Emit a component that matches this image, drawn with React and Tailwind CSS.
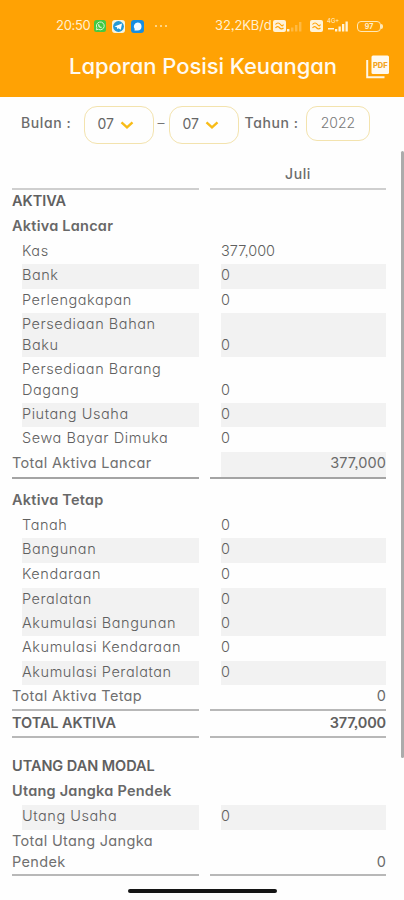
import React from 'react';

const ROWS = [
    { type: 'title', label: 'AKTIVA', h: 'h-[25px]' },
    { type: 'group', label: 'Aktiva Lancar', h: 'h-[25px]' },
    { type: 'item', label: 'Kas', value: '377,000', h: 'h-[24px]' },
    { type: 'item', label: 'Bank', value: '0', h: 'h-[25px]', striped: true },
    { type: 'item', label: 'Perlengakapan', value: '0', h: 'h-[24px]' },
    { type: 'item', label: 'Persediaan Bahan Baku', value: '0', h: 'h-[44px]', striped: true, tall: true },
    { type: 'item', label: 'Persediaan Barang Dagang', value: '0', h: 'h-[46px]', tall: true, nudge: true },
    { type: 'item', label: 'Piutang Usaha', value: '0', h: 'h-[24px]', striped: true },
    { type: 'item', label: 'Sewa Bayar Dimuka', value: '0', h: 'h-[25px]' },
    { type: 'total', label: 'Total Aktiva Lancar', value: '377,000', h: 'h-[25px]', shaded: true },
    { type: 'line', h: 'h-[12px]', color: 'bg-[#a4a4a4]' },
    { type: 'group', label: 'Aktiva Tetap', h: 'h-[25px]' },
    { type: 'item', label: 'Tanah', value: '0', h: 'h-[24px]' },
    { type: 'item', label: 'Bangunan', value: '0', h: 'h-[25px]', striped: true },
    { type: 'item', label: 'Kendaraan', value: '0', h: 'h-[25px]' },
    { type: 'item', label: 'Peralatan', value: '0', h: 'h-[24px]', striped: true },
    { type: 'item', label: 'Akumulasi Bangunan', value: '0', h: 'h-[24px]', striped: true },
    { type: 'item', label: 'Akumulasi Kendaraan', value: '0', h: 'h-[25px]' },
    { type: 'item', label: 'Akumulasi Peralatan', value: '0', h: 'h-[24px]', striped: true },
    { type: 'total', label: 'Total Aktiva Tetap', value: '0', h: 'h-[24px]' },
    { type: 'line', h: 'h-[3px]', color: 'bg-[#b8b8b8]' },
    { type: 'grand', label: 'TOTAL AKTIVA', value: '377,000', h: 'h-[24px]' },
    { type: 'line', h: 'h-[19px]', color: 'bg-[#b8b8b8]' },
    { type: 'title', label: 'UTANG DAN MODAL', h: 'h-[25px]' },
    { type: 'group', label: 'Utang Jangka Pendek', h: 'h-[25px]' },
    { type: 'item', label: 'Utang Usaha', value: '0', h: 'h-[25px]', striped: true },
    { type: 'total', label: 'Total Utang Jangka Pendek', value: '0', h: 'h-[44px]', tall: true },
    { type: 'line', h: 'h-[4px]', color: 'bg-[#b8b8b8]' },
];

const LABEL_STYLES = {
    title: 'font-semibold text-[#606060] tracking-[-0.04px]',
    group: 'font-semibold text-[#686868] tracking-[0.24px]',
    item: 'font-light text-[#606060] tracking-[0.56px]',
    total: 'font-normal text-[#707070] tracking-[0.33px]',
    grand: 'font-semibold text-[#606060] tracking-[-0.08px]',
};

const VALUE_STYLES = {
    item: 'font-light text-[#606060]',
    total: 'justify-end font-normal text-[#6a6a6a] tracking-[0.1px]',
    grand: 'justify-end font-semibold text-[#606060] tracking-[-0.15px]',
};

const Row = ({ row }) => {
    if (row.type === 'line') {
        return (
            <div className={`flex gap-[11px] ${row.h}`}>
                <div className={`h-[2px] w-[187px] ${row.color}`} />
                <div className={`h-[2px] w-[176px] ${row.color}`} />
            </div>
        );
    }

    const isItem = row.type === 'item';
    const bg = row.striped ? 'bg-[#f2f2f2]' : '';
    const top = row.nudge ? 'pt-[2px]' : 'pt-px';
    const valueTop = row.nudge ? 'pt-[22.5px]' : row.tall ? 'pt-[21.5px]' : 'pt-px';

    return (
        <div className={`flex gap-[22px] text-[14.5px] leading-[20.5px] ${row.h}`}>
            <div
                className={`${LABEL_STYLES[row.type]} ${top} ${
                    isItem ? `ml-[10px] w-[177px] ${row.tall ? 'pr-[28px]' : ''} ${bg}` : 'w-[187px] pr-3'
                }`}
            >
                {row.label}
            </div>
            <div
                className={`flex w-[165px] ${valueTop} ${VALUE_STYLES[row.type] || ''} ${bg} ${
                    row.shaded ? 'bg-[#f2f2f2]' : ''
                }`}
            >
                {row.value}
            </div>
        </div>
    );
};

const MonthSelect = ({ value }) => (
    <button className="flex h-[38px] w-[70px] items-center gap-[6px] rounded-[13px] border-[1.5px] border-[#f3e3ae] pl-[13px] pb-[3px] text-[14px] font-normal text-[#666]">
        {value}
        <svg className="mt-[3px] h-[8px] w-[14px]" viewBox="0 0 14 8" fill="none" stroke="#f8bc18" strokeWidth="2.4">
            <path d="M1.500 1.300 7 6.300 12.500 1.300" />
        </svg>
    </button>
);

const Signal = ({ faded }) => (
    <svg className="h-[12px] w-[18px]" viewBox="0 0 18 12" fill="#fff3d8">
        <rect x="1" y="9" width="2.4" height="2.5" />
        <rect x="5" y="7.5" width="2.4" height="4" opacity={faded ? 0.3 : 1} />
        <rect x="9" y="5" width="2.4" height="6.5" opacity={faded ? 0.3 : 1} />
        <rect x="13" y="2" width="2.4" height="9.5" opacity={faded ? 0.3 : 1} />
    </svg>
);

const SimBadge = () => (
    <svg className="h-[12px] w-[13px]" viewBox="0 0 13 12">
        <rect width="13" height="12" rx="2" fill="#fff3d8" />
        <path
            d="M2.500 4.500c1.500-2 3.500-2 5 0s2 1.500 3 0M2.500 8c1.500-2 3-1.500 4.300 0s2.500 1 3.700 0"
            fill="none"
            stroke="#ffa204"
            strokeWidth="1.2"
        />
    </svg>
);

const StatusBar = () => (
    <div className="flex h-[52px] items-center pl-[56px] text-[13px] text-[#fff0d0]">
        <span className="w-[38px] tracking-[-0.3px]">20:50</span>
        <svg className="h-[12px] w-[12px]" viewBox="0 0 12 12">
            <rect width="12" height="12" rx="2.5" fill="#43c942" />
            <path d="m2.300 9.800.6-2A3.900 3.900 0 1 1 4.400 9.300z" fill="none" stroke="#d8f5d0" strokeWidth="1" />
            <path d="M4.600 4.300c0 2 1.300 3.200 3 3.200" fill="none" stroke="#d8f5d0" strokeWidth="1.300" />
        </svg>
        <svg className="ml-[6px] h-[13px] w-[13px]" viewBox="0 0 13 13">
            <rect width="13" height="13" rx="3" fill="#f7f4df" />
            <circle cx="6.500" cy="6.500" r="5.400" fill="#2499d7" />
            <path d="m2.500 6.500 7.500-3-1.200 6.300-2.300-1.600-1.200 1-.3-2z" fill="#fff" />
        </svg>
        <svg className="ml-[6px] h-[13px] w-[13px]" viewBox="0 0 13 13">
            <rect width="13" height="13" rx="3" fill="#168de0" />
            <path d="M6.500 2.500a4 4 0 0 1 0 8H3.400l.3-1.500A4 4 0 0 1 6.500 2.500z" fill="#f3fbff" />
        </svg>
        <div className="ml-[11px] flex gap-[3px]">
            <i className="size-[2px] rounded-full bg-[#ffe5ad]" />
            <i className="size-[2px] rounded-full bg-[#ffe5ad]" />
            <i className="size-[2px] rounded-full bg-[#ffe5ad]" />
        </div>
        <span className="ml-[48px] w-[58px] whitespace-nowrap tracking-[-0.1px]">32,2KB/d</span>
        <SimBadge />
        <Signal faded />
        <div className="ml-[6px] flex items-center">
            <SimBadge />
            <div className="relative ml-[4px]">
                <span className="absolute -top-[2px] left-0 text-[6px] leading-none">4G+</span>
                <svg className="h-[12px] w-[22px]" viewBox="0 0 22 12" fill="#fff3d8">
                    <path d="M1 8h6v1.500H1zM8 9h2.300v2.500H8zM11.500 6.500h2.300v5h-2.300zM15 4h2.300v7.500H15zM18.500 1.500h2.300v10h-2.300z" />
                </svg>
            </div>
        </div>
        <div className="ml-[8px] flex h-[11px] w-[24px] items-center justify-center rounded-[4px] border border-[#ffe9b8] text-[7px] font-bold leading-none">
            97
        </div>
        <div className="h-[5px] w-[2px] rounded-r bg-[#ffe9b8]" />
    </div>
);

const App = () => {
    return (
        <div className="relative flex h-[900px] w-[404px] flex-col overflow-hidden bg-[#fefefe] font-['Inter','Liberation_Sans',sans-serif] [font-feature-settings:'cv11','ss03']">
            {/* Header */}
            <header className="h-[97px] bg-[#ffa204]">
                <StatusBar />
                <div className="flex items-center">
                    <h1 className="ml-[69px] w-[297px] whitespace-nowrap text-[22px] font-medium leading-[28px] tracking-[-0.06px] text-[#fffaf0]">
                        Laporan Posisi Keuangan
                    </h1>
                    <svg className="mt-[2px] h-[24px] w-[24px]" viewBox="0 0 24 24">
                        <path d="M1.200 5v17.300H18.500" fill="none" stroke="#fff6e2" strokeWidth="2" />
                        <rect x="5.500" y="0.500" width="17.500" height="18.500" rx="1.500" fill="#fffaf0" />
                        <text x="14.300" y="12.500" textAnchor="middle" fontSize="7.500" fontWeight="800" fill="#f3a421">
                            PDF
                        </text>
                    </svg>
                </div>
            </header>

            {/* Period filter */}
            <div className="flex h-[54px] items-start pl-[21px] pt-[9px] text-[14px] font-medium text-[#6c6c6c]">
                <span className="w-[62.5px] pt-[6px] tracking-[0.6px]">Bulan :</span>
                <MonthSelect value="07" />
                <span className="w-[15px] pt-[6px] text-center font-light">–</span>
                <MonthSelect value="07" />
                <span className="ml-[6px] w-[61.5px] whitespace-nowrap pt-[6px] tracking-[0.6px]">Tahun :</span>
                <div className="h-[35px] w-[64px] rounded-[11px] border-[1.5px] border-[#f3e3ae] pt-[5px] text-center font-light text-[#777]">
                    2022
                </div>
            </div>

            {/* Report */}
            <div className="flex">
                <main className="w-[401px] pl-[12px]">
                    <div className="ml-[198px] h-[37px] w-[176px] pt-[12px] text-center text-[14px] font-medium tracking-[0.6px] text-[#6c6c6c]">
                        Juli
                    </div>
                    <div className="flex gap-[11px]">
                        <div className="h-[2px] w-[187px] bg-[#cfcfcf]" />
                        <div className="h-[2px] w-[176px] bg-[#cfcfcf]" />
                    </div>
                    {ROWS.map((row, i) => (
                        <Row key={i} row={row} />
                    ))}
                </main>
                <div className="h-[607px] w-[3px] rounded-full bg-[#ababab]" />
            </div>

            <div className="absolute left-[128px] top-[889px] h-[4px] w-[149px] rounded-full bg-[#151515]" />
        </div>
    );
};

export default App;
